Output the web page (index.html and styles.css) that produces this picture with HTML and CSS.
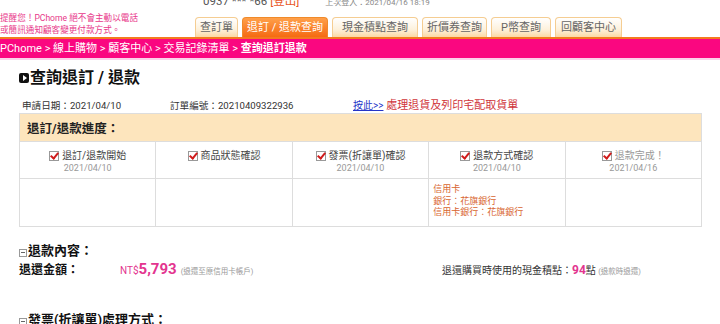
FILE: index.html
```html
<!DOCTYPE html>
<html lang="zh-Hant">
<head>
    <meta charset="UTF-8">
    <meta name="viewport" content="width=device-width, initial-scale=1.0">
    <title>PChome - 查詢退訂 / 退款</title>
    <link rel="stylesheet" href="styles.css">
</head>
<body>
    <div class="header">
        <div class="notice">
            提醒您！PChome 絕不會主動以電話<br>
            或簡訊通知顧客變更付款方式。
        </div>
        <div class="header-right">
            <div class="account">
                <span class="phone">0937 *** *66 <a class="logout">[登出]</a></span>
                <span class="last-login">上次登入：2021/04/16 18:19</span>
            </div>
            <div class="tabs">
                <a class="tab">查訂單</a>
                <a class="tab active">退訂 / 退款查詢</a>
                <a class="tab tab-wide">現金積點查詢</a>
                <a class="tab">折價券查詢</a>
                <a class="tab tab-wide">P幣查詢</a>
                <a class="tab tab-mid">回顧客中心</a>
            </div>
        </div>
    </div>
    <div class="breadcrumb">
        PChome &gt; 線上購物 &gt; 顧客中心 &gt; 交易記錄清單 &gt; <b>查詢退訂退款</b>
    </div>

    <div class="content">
        <h1><span class="arrow-icon"></span>查詢退訂 / 退款</h1>

        <div class="order-info">
            <span class="apply-date">申請日期：2021/04/10</span>
            <span class="order-no">訂單編號：20210409322936</span>
            <span class="return-link"><a href="#">按此&gt;&gt;</a> 處理退貨及列印宅配取貨單</span>
        </div>

        <table class="progress">
            <tr>
                <th colspan="5">退訂/退款進度：</th>
            </tr>
            <tr class="steps">
                <td>
                    <div class="step"><span class="check"></span>退訂/退款開始</div>
                    <div class="date">2021/04/10</div>
                </td>
                <td>
                    <div class="step"><span class="check"></span>商品狀態確認</div>
                    <div class="date"></div>
                </td>
                <td>
                    <div class="step"><span class="check"></span>發票(折讓單)確認</div>
                    <div class="date">2021/04/10</div>
                </td>
                <td>
                    <div class="step"><span class="check"></span>退款方式確認</div>
                    <div class="date">2021/04/10</div>
                </td>
                <td>
                    <div class="step done"><span class="check"></span>退款完成！</div>
                    <div class="date">2021/04/16</div>
                </td>
            </tr>
            <tr class="details">
                <td></td>
                <td></td>
                <td></td>
                <td class="refund-method">
                    信用卡<br>
                    銀行：花旗銀行<br>
                    信用卡銀行：花旗銀行
                </td>
                <td></td>
            </tr>
        </table>

        <h2><span class="minus-icon"></span>退款內容：</h2>
        <div class="refund-row">
            <div class="refund-amount">
                <span class="label">退還金額：</span>
                <span class="money"><small>NT$</small>5,793</span>
                <span class="note">(退還至原信用卡帳戶)</span>
            </div>
            <div class="refund-points">
                退還購買時使用的現金積點：<span class="points">94</span>點 <span class="note">(退款時退還)</span>
            </div>
        </div>

        <h2 class="invoice-title"><span class="minus-icon"></span>發票(折讓單)處理方式：</h2>
    </div>
</body>
</html>
```

FILE: styles.css
```css
body {
    margin: 0;
    font-family: Roboto, "Noto Sans CJK TC", sans-serif;
    color: #333;
    background: #fff;
    overflow: hidden;
}

a {
    cursor: pointer;
}

.header {
    display: flex;
    align-items: flex-end;
    height: 37px;
}

.notice {
    width: 195px;
    color: #e8388a;
    font-size: 8.6px;
    line-height: 12px;
    padding-bottom: 1px;
}

.header-right {
    display: flex;
    flex-direction: column;
}

.account {
    display: flex;
    align-items: baseline;
    gap: 26px;
    padding-left: 8px;
    height: 17px;
    line-height: 2px;
}

.phone {
    font-size: 11.5px;
    color: #555;
}

.logout {
    color: #e8551e;
}

.last-login {
    font-size: 8px;
    color: #888;
}

.tabs {
    display: flex;
    gap: 4px;
}

.tab {
    height: 19px;
    line-height: 19px;
    padding: 0 4px;
    font-size: 11px;
    color: #666;
    border: 1px solid #f5cd92;
    border-bottom: none;
    border-radius: 4px 4px 0 0;
    background: linear-gradient(#fff, #fdf1dc 60%, #fbd9a4);
}

.tab-wide {
    padding: 0 9px;
}

.tab-mid {
    padding: 0 5px;
}

.tab.active {
    color: #fff;
    border-color: #f08a2a;
    background: linear-gradient(#ffa04a, #f56a12);
}

.breadcrumb {
    border-top: 2px solid #f47a1f;
    border-bottom: 2px solid #fbd3ea;
    background: #fa0780;
    color: #fff;
    font-size: 11px;
    height: 19px;
    line-height: 19px;
}

.content {
    padding-left: 19px;
    width: 683px;
}

h1 {
    display: flex;
    align-items: center;
    margin: 7px 0 0;
    font-size: 16px;
    line-height: 22px;
    color: #111;
}

.arrow-icon {
    position: relative;
    width: 10px;
    height: 10px;
    background: #111;
    border-radius: 2px;
    margin-right: 1px;
}

.arrow-icon::after {
    content: "";
    position: absolute;
    left: 4px;
    top: 2px;
    border-left: 4px solid #fff;
    border-top: 3px solid transparent;
    border-bottom: 3px solid transparent;
}

.order-info {
    display: flex;
    align-items: baseline;
    font-size: 9.6px;
    margin-top: 10px;
    padding-left: 3px;
    line-height: 14px;
}

.apply-date {
    width: 148px;
}

.order-no {
    width: 183px;
}

.return-link {
    color: #d0343a;
    font-size: 11px;
}

.return-link a {
    color: #2535c8;
    font-size: 10px;
    text-decoration: underline;
}

.progress {
    width: 683px;
    border-collapse: collapse;
    margin-top: 0;
    table-layout: fixed;
}

.progress th,
.progress td {
    border: 1px solid #ddd;
}

.progress th {
    background: #fde5bd;
    text-align: left;
    font-size: 12.5px;
    height: 27px;
    padding: 0 0 0 7px;
    color: #222;
}

.steps td {
    height: 28px;
    text-align: center;
    vertical-align: top;
    padding: 8px 0 0;
}

.step {
    display: flex;
    justify-content: center;
    align-items: center;
    font-size: 10px;
    line-height: 12px;
    color: #444;
}

.step.done {
    color: #999;
}

.check {
    position: relative;
    width: 8px;
    height: 8px;
    border: 1px solid #999;
    background: #fff;
    margin-right: 3px;
}

.check::after {
    content: "";
    position: absolute;
    left: 2px;
    top: -1px;
    width: 3px;
    height: 6px;
    border-right: 2px solid #d01c1c;
    border-bottom: 2px solid #d01c1c;
    transform: rotate(40deg);
}

.date {
    font-size: 9px;
    color: #999;
    line-height: 12px;
    min-height: 12px;
}

.details td {
    height: 42px;
    vertical-align: top;
}

.refund-method {
    color: #d8642e;
    font-size: 9px;
    line-height: 11.5px;
    padding: 5px 0 0 4px;
}

h2 {
    display: flex;
    align-items: center;
    margin: 15px 0 0;
    font-size: 13px;
    line-height: 18px;
    color: #111;
}

.minus-icon {
    position: relative;
    width: 6px;
    height: 6px;
    border: 1px solid #999;
    margin: 4px 1px 0 0;
}

.minus-icon::after {
    content: "";
    position: absolute;
    left: 1px;
    top: 2px;
    width: 4px;
    height: 1px;
    background: #666;
}

.refund-row {
    display: flex;
    align-items: baseline;
    line-height: 18px;
}

.refund-amount {
    width: 423px;
}

.label {
    display: inline-block;
    width: 97px;
    font-size: 12px;
    font-weight: bold;
    color: #111;
}

.money {
    color: #e3358f;
    font-size: 15px;
    font-weight: bold;
}

.money small {
    font-size: 10px;
    font-weight: normal;
}

.note {
    font-size: 7.5px;
    color: #999;
}

.refund-points {
    font-size: 10px;
}

.points {
    color: #e3358f;
    font-size: 12px;
    font-weight: bold;
}

.invoice-title {
    margin-top: 30px;
}
```
